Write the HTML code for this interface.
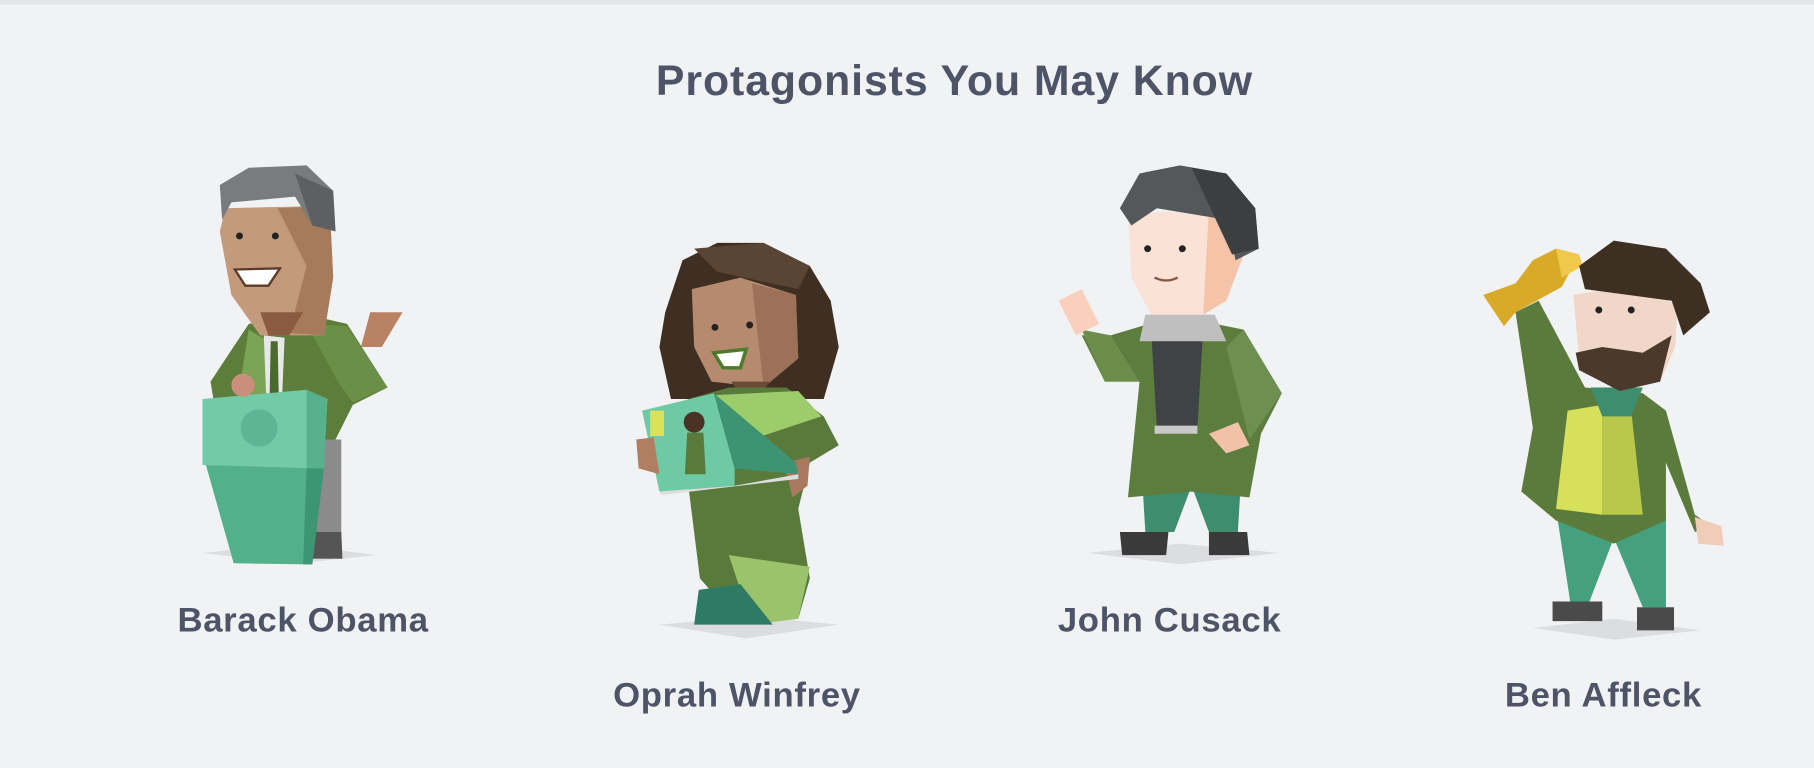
<!DOCTYPE html>
<html><head><meta charset="utf-8"><style>
html,body{margin:0;padding:0;background:#f1f2f4;width:1814px;height:768px;overflow:hidden}
svg{display:block}
text{font-family:"Liberation Sans",sans-serif;fill:#4e5467;font-weight:600;text-anchor:middle}
</style></head><body>
<svg width="1814" height="768" viewBox="0 0 1568 664" preserveAspectRatio="none">
<rect x="0" y="0" width="1568" height="664" fill="#f1f2f4"/>
<rect x="0" y="0" width="1568" height="4" fill="#e3e4e7"/>
<text x="825" y="82" font-size="37" letter-spacing="0.8">Protagonists You May Know</text>

<!-- Obama -->
<g>
<polygon points="176,478 250,470 325,480 250,488" fill="#dcdde0"/>
<polygon points="268,380 295,380 295,483 268,483" fill="#8b8b8b"/>
<polygon points="270,460 295,460 296,483 270,483" fill="#555"/>
<polygon points="182,330 215,280 265,272 300,280 335,335 305,350 290,380 190,380" fill="#5c7e3a"/>
<polygon points="215,285 240,300 235,380 200,380" fill="#7ca455"/>
<polygon points="265,280 300,282 335,335 305,348 292,330" fill="#6a8f47"/>
<polygon points="228,290 246,292 244,340 230,340" fill="#e8e8e8"/>
<polygon points="234,295 240,295 241,345 233,345" fill="#4a6b2e"/>
<polygon points="312,300 320,270 348,270 330,300" fill="#b88263"/>
<polygon points="195,180 285,178 288,240 280,290 225,290 200,255 190,200" fill="#c49a7c"/>
<polygon points="240,180 285,178 288,240 280,290 250,288 265,230" fill="#a77a5b"/>
<polygon points="225,270 262,270 250,290 232,290" fill="#8a5b40"/>
<polygon points="190,160 215,145 265,143 288,165 290,200 270,195 255,170 200,175 192,190" fill="#7a7b7d"/>
<polygon points="255,150 288,165 290,200 270,195" fill="#5e5f61"/>
<circle cx="207" cy="204" r="3" fill="#222"/><circle cx="238" cy="204" r="3" fill="#222"/>
<polygon points="203,233 242,232 232,247 212,247" fill="#fff" stroke="#5a3a28" stroke-width="2"/>
<polygon points="175,345 265,337 283,345 280,405 175,402" fill="#72caa6"/>
<polygon points="265,337 283,345 280,405 265,405" fill="#58b08d"/>
<polygon points="178,402 280,405 268,488 202,487" fill="#52b18b"/>
<polygon points="265,405 280,405 270,488 262,488" fill="#3d9673"/>
<circle cx="224" cy="370" r="16" fill="#5db595"/>
<circle cx="210" cy="333" r="10" fill="#c98f7a"/>
</g>

<!-- Oprah -->
<g>
<polygon points="570,540 650,533 725,540 645,552" fill="#dcdde0"/>
<polygon points="575,270 590,225 620,210 660,210 700,230 718,260 725,300 712,345 580,345 570,300" fill="#3f2e22"/>
<polygon points="600,215 660,210 700,230 690,250 620,235" fill="#5a4535"/>
<polygon points="598,250 640,240 688,255 690,310 660,335 615,330 600,300" fill="#b58a6e"/>
<polygon points="650,245 688,255 690,310 660,335" fill="#9c7158"/>
<polygon points="617,305 645,302 640,318 625,318" fill="#fff" stroke="#4d7a2b" stroke-width="3"/>
<circle cx="618" cy="283" r="3" fill="#222"/><circle cx="648" cy="281" r="3" fill="#222"/>
<polygon points="632,330 665,330 650,355" fill="#6d4a36"/>
<polygon points="595,345 630,335 680,335 712,360 725,385 700,400 690,440 700,500 690,535 640,540 605,500 595,420" fill="#5a7a3c"/>
<polygon points="610,342 690,338 710,360 650,380" fill="#9ccc6c"/>
<polygon points="630,480 700,490 690,535 650,540" fill="#9ac36b"/>
<polygon points="604,510 640,505 668,540 600,540" fill="#2f7a65"/>
<polygon points="678,400 700,395 698,420 685,430" fill="#a97a60"/>
<polygon points="555,355 617,340 635,405 635,420 570,425" fill="#6ecaa5"/>
<polygon points="617,340 635,405 690,410 688,400" fill="#3e9373"/>
<polygon points="570,425 635,420 690,410 690,414 572,428" fill="#dddddd"/>
<rect x="562" y="355" width="12" height="22" fill="#d8e35a"/>
<circle cx="600" cy="365" r="9" fill="#4a3322"/>
<polygon points="594,374 608,374 610,410 592,410" fill="#5a7a3c"/>
<polygon points="550,380 565,378 570,410 552,405" fill="#b07e60"/>
</g>

<!-- John -->
<g>
<polygon points="940,478 1020,470 1105,478 1020,488" fill="#dcdde0"/>
<polygon points="985,375 1075,375 1070,460 1045,460 1030,420 1015,460 990,460" fill="#3d8d6e"/>
<polygon points="968,460 1010,460 1008,480 970,480" fill="#3a3a3a"/>
<polygon points="1045,460 1078,460 1080,480 1045,480" fill="#3a3a3a"/>
<polygon points="960,290 1000,278 1040,278 1075,285 1108,340 1090,375 1080,430 1030,425 975,430 985,330 955,330 935,290" fill="#5c7d3d"/>
<polygon points="1075,285 1108,340 1080,380 1060,300" fill="#6d8f50"/>
<polygon points="935,285 960,290 985,330 955,330" fill="#6a8d4c"/>
<polygon points="995,285 1040,285 1035,370 1000,370" fill="#404345"/>
<polygon points="990,272 1050,272 1060,295 985,295" fill="#bfbfbf"/>
<polygon points="998,368 1035,368 1035,375 998,375" fill="#c9c9c9"/>
<polygon points="1045,375 1070,365 1080,385 1060,392" fill="#f1c1a8"/>
<polygon points="915,260 935,250 950,280 930,290" fill="#f8d0bb"/>
<polygon points="975,185 1060,180 1075,220 1060,260 1040,272 995,272 978,240" fill="#fae2d7"/>
<polygon points="1045,180 1075,220 1060,260 1040,272" fill="#f4c3a8"/>
<polygon points="968,180 985,150 1020,143 1060,150 1085,180 1088,215 1068,225 1060,190 1000,180 978,195" fill="#55585b"/>
<polygon points="1030,145 1060,150 1085,180 1088,215 1065,220" fill="#3c3f40"/>
<circle cx="992" cy="215" r="3" fill="#222"/><circle cx="1022" cy="215" r="3" fill="#222"/>
<path d="M998 240 Q1008 245 1018 240" stroke="#8a5a40" stroke-width="2" fill="none"/>
</g>

<!-- Ben -->
<g>
<polygon points="1325,543 1395,535 1470,545 1395,553" fill="#dcdde0"/>
<polygon points="1345,440 1440,440 1440,525 1420,525 1395,465 1372,525 1358,525" fill="#45a07e"/>
<polygon points="1342,520 1385,520 1385,537 1342,537" fill="#4a4a4a"/>
<polygon points="1415,525 1447,525 1447,545 1415,545" fill="#4a4a4a"/>
<polygon points="1310,270 1330,260 1370,335 1420,340 1440,355 1465,445 1480,455 1465,460 1440,400 1440,450 1395,470 1345,450 1315,425 1325,370" fill="#5a7b3b"/>
<polygon points="1355,355 1385,350 1385,445 1345,440" fill="#d6e05a"/>
<polygon points="1385,350 1410,355 1420,445 1385,445" fill="#b9c84a"/>
<polygon points="1375,335 1420,335 1410,360 1385,360" fill="#3d8d6e"/>
<polygon points="1465,447 1488,455 1490,472 1468,470" fill="#efcdb8"/>
<polygon points="1282,255 1310,245 1325,225 1345,215 1365,220 1350,248 1310,270 1300,282" fill="#d9a928"/>
<polygon points="1345,215 1365,220 1368,230 1350,240" fill="#f0c84a"/>
<polygon points="1360,255 1420,245 1450,265 1448,300 1435,330 1400,335 1365,310" fill="#f0d7c8"/>
<polygon points="1362,305 1385,300 1420,305 1445,290 1435,330 1400,338 1365,320" fill="#4b3a2c"/>
<polygon points="1365,230 1395,208 1440,215 1470,245 1478,270 1455,290 1445,260 1370,250" fill="#3e2f23"/>
<circle cx="1382" cy="268" r="3" fill="#222"/><circle cx="1410" cy="268" r="3" fill="#222"/>
</g>

<text x="262" y="546" font-size="30" letter-spacing="0.6">Barack Obama</text>
<text x="637" y="611" font-size="30" letter-spacing="0.6">Oprah Winfrey</text>
<text x="1011" y="546" font-size="30" letter-spacing="0.6">John Cusack</text>
<text x="1386" y="611" font-size="30" letter-spacing="0.6">Ben Affleck</text>
</svg>
</body></html>
